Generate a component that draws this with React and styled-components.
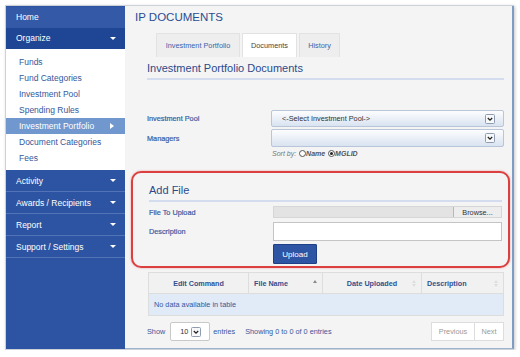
import React from 'react'
import styled, { createGlobalStyle } from 'styled-components'

const GlobalStyle = createGlobalStyle`
  html, body { margin: 0; padding: 0; background: #fff; }
  body { font-family: "Liberation Sans", Arial, sans-serif; }
  * { box-sizing: border-box; }
`

const Frame = styled.div`
  margin: 5px 0 0 5px;
  width: 509px;
  height: 345px;
  border: 1px solid #cdd2d9;
  box-shadow: 1px 1px 3px rgba(0, 0, 0, 0.22);
  display: grid;
  grid-template-columns: 119px 1fr;
  background: #fff;
`

/* ---------- sidebar ---------- */
const Sidebar = styled.nav`
  background: #2d54a2;
  padding-top: 1px;
  display: flex;
  flex-direction: column;
`

const NavHead = styled.div`
  height: ${p => p.h || 21}px;
  display: flex;
  align-items: center;
  justify-content: space-between;
  padding: 0 9px 0 10px;
  background: ${p => p.bg || '#2d54a2'};
  color: #fff;
  font-size: 8.5px;
  border-bottom: 1px solid ${p => (p.line ? '#5273b5' : 'transparent')};
`

const Caret = styled.span`
  width: 0;
  height: 0;
  border-left: 3px solid transparent;
  border-right: 3px solid transparent;
  border-top: 3px solid #fff;
`

const CaretRight = styled.span`
  width: 0;
  height: 0;
  border-top: 3px solid transparent;
  border-bottom: 3px solid transparent;
  border-left: 4px solid #fff;
`

const SubMenu = styled.div`
  background: #fff;
  padding: 5px 0 4px;
`

const SubItem = styled.div`
  height: 16px;
  display: flex;
  align-items: center;
  justify-content: space-between;
  padding: 0 11px 0 13px;
  font-size: 8.5px;
  color: ${p => (p.active ? '#fff' : '#34589c')};
  background: ${p => (p.active ? '#7098cf' : 'transparent')};
`

/* ---------- main ---------- */
const Main = styled.main`
  background: #f4f4f4;
  border-right: 2px solid #7f9dc3;
  border-bottom: 1px solid #9db3cf;
  padding: 4px 8px 0 22px;
  display: flex;
  flex-direction: column;
`

const Title = styled.h1`
  margin: 0 0 0 -12px;
  font-size: 11.5px;
  line-height: 14px;
  font-weight: normal;
  color: #2a4d93;
`

const Tabs = styled.div`
  display: flex;
  gap: 2px;
  margin: 9px 0 0 9px;
  height: 24px;
`

const Tab = styled.div`
  width: ${p => p.w}px;
  display: flex;
  align-items: center;
  justify-content: center;
  font-size: 7.3px;
  color: ${p => (p.active ? '#444' : '#3d63a9')};
  background: ${p => (p.active ? '#fff' : '#eeeeee')};
  border: 1px solid #e2e2e2;
  border-bottom: none;
`

const Heading = styled.h2`
  margin: ${p => p.mt || 5}px 0 0;
  font-size: 11px;
  line-height: 13px;
  font-weight: normal;
  color: #2b4a8b;
`

const Rule = styled.div`
  height: 2px;
  margin-top: 3px;
  background: #d3ddef;
`

const Form = styled.div`
  margin-top: 30px;
  display: flex;
  flex-direction: column;
  gap: 2px;
`

const Row = styled.div`
  display: grid;
  grid-template-columns: 124px 1fr;
  align-items: center;
  margin-top: ${p => p.mt || 0}px;
`

const Label = styled.span`
  font-size: 7.3px;
  color: #3a5ca3;
  -webkit-text-stroke: 0.2px #3a5ca3;
`

const Select = styled.div`
  height: ${p => p.h || 17}px;
  display: flex;
  align-items: center;
  justify-content: space-between;
  padding: 0 8px 0 10px;
  border: 1px solid #b9c5d9;
  border-radius: 2px;
  background: linear-gradient(#fdfdfe, #d9e3f1);
  font-size: 7.3px;
  color: #333;
`

const SortBy = styled.div`
  margin: 2px 0 0 125px;
  height: 8px;
  font-size: 7px;
  font-style: italic;
  color: #777;
  display: flex;
  align-items: center;
  b { color: #555; }
`

const Radio = styled.span`
  width: 7px;
  height: 7px;
  margin: 0 0 0 1px;
  border-radius: 50%;
  border: 1px solid #555;
  background: #fff;
  display: inline-flex;
  align-items: center;
  justify-content: center;
  &::after {
    content: '';
    width: 3px;
    height: 3px;
    border-radius: 50%;
    background: ${p => (p.checked ? '#222' : 'transparent')};
  }
`

const Highlight = styled.section`
  margin: 14px -6px 0 -16px;
  padding: 0 6px 2px 16px;
  border: 2px solid #dc3f3f;
  border-radius: 10px;
  box-shadow: 0 0 2px rgba(220, 60, 60, 0.5);
`

const FileBar = styled.div`
  height: 12px;
  display: flex;
  justify-content: flex-end;
  background: #e3e3e3;
  border: 1px solid #d6d6d6;
`

const Browse = styled.span`
  width: 48px;
  display: flex;
  align-items: center;
  justify-content: center;
  background: #ededed;
  border-left: 1px solid #b8b8b8;
  font-size: 7.3px;
  color: #333;
`

const TextInput = styled.div`
  height: 19px;
  background: #fff;
  border: 1px solid #c4c4c4;
`

const Button = styled.button`
  width: 44px;
  height: 20px;
  padding: 0;
  background: #2d55a3;
  border: 1px solid #1f4087;
  border-radius: 1px;
  color: #fff;
  font-family: inherit;
  font-size: 8px;
`

const Table = styled.table`
  margin: 4px 0 0 1px;
  width: 355px;
  border-collapse: collapse;
  table-layout: fixed;
`

const Th = styled.th`
  height: 21px;
  width: ${p => p.w}px;
  padding: 0 ${p => (p.center ? 0 : 5)}px;
  text-align: ${p => (p.center ? 'center' : 'left')};
  position: relative;
  background: #f1f1f1;
  border: 1px solid #dddddd;
  font-size: 7.2px;
  font-weight: bold;
  color: #31508f;
`

const SortIcon = styled.span`
  position: absolute;
  right: 5px;
  top: 7px;
  display: flex;
  flex-direction: column;
  gap: 1px;
  &::before, &::after {
    content: '';
    width: 0;
    height: 0;
    border-left: 2px solid transparent;
    border-right: 2px solid transparent;
  }
  &::before { border-bottom: 3px solid ${p => (p.asc ? '#8a8a8a' : '#dedede')}; }
  &::after { border-top: 3px solid ${p => (p.asc ? 'transparent' : '#dedede')}; }
`

const Td = styled.td`
  height: 22px;
  padding: 0 5px;
  background: #e1eaf7;
  border: 1px solid #dddddd;
  font-size: 7.3px;
  color: #34589c;
`

const Footer = styled.div`
  margin-top: 6px;
  height: 19px;
  display: flex;
  align-items: center;
  font-size: 7.3px;
  color: #34589c;
`

const LengthSelect = styled.div`
  width: 40px;
  height: 19px;
  margin: 0 3px 0 5px;
  display: flex;
  align-items: center;
  justify-content: space-between;
  padding: 0 8px 0 9px;
  background: #fff;
  border: 1px solid #c9c9c9;
  border-radius: 2px;
  color: #333;
`

const Info = styled.span`
  margin-left: 10px;
`

const Pager = styled.div`
  margin-left: auto;
  display: flex;
`

const PageButton = styled.span`
  width: ${p => p.w}px;
  height: 19px;
  display: flex;
  align-items: center;
  justify-content: center;
  background: #fff;
  border: 1px solid #dddddd;
  margin-left: -1px;
  color: #999;
`

const Chevron = () => (
  <svg width="10" height="10" viewBox="0 0 10 10">
    <rect x="0.5" y="0.5" width="9" height="9" rx="1" fill="#f7f8fa" stroke="#8e9bb0" />
    <path d="M2.8 4 L5 6.2 L7.2 4" fill="none" stroke="#222" strokeWidth="1.3" />
  </svg>
)

const subItems = ['Funds', 'Fund Categories', 'Investment Pool', 'Spending Rules', 'Investment Portfolio', 'Document Categories', 'Fees']
const lowerItems = ['Activity', 'Awards / Recipients', 'Report', 'Support / Settings']

export default function App() {
  return (
    <>
      <GlobalStyle />
      <Frame>
        <Sidebar>
          <NavHead bg="#3459a7">Home</NavHead>
          <NavHead bg="#1f4694">Organize <Caret /></NavHead>
          <SubMenu>
            {subItems.map(item => (
              <SubItem key={item} active={item === 'Investment Portfolio'}>
                {item}
                {item === 'Investment Portfolio' && <CaretRight />}
              </SubItem>
            ))}
          </SubMenu>
          {lowerItems.map(item => (
            <NavHead key={item} h={22} line>
              {item} <Caret />
            </NavHead>
          ))}
        </Sidebar>

        <Main>
          <Title>IP DOCUMENTS</Title>
          <Tabs>
            <Tab w={84}>Investment Portfolio</Tab>
            <Tab w={55} active>Documents</Tab>
            <Tab w={41}>History</Tab>
          </Tabs>
          <Heading>Investment Portfolio Documents</Heading>
          <Rule />

          <Form>
            <Row>
              <Label>Investment Pool</Label>
              <Select>&lt;-Select Investment Pool-&gt; <Chevron /></Select>
            </Row>
            <Row>
              <Label>Managers</Label>
              <Select h={18}><span /> <Chevron /></Select>
            </Row>
          </Form>
          <SortBy>
            Sort by:&nbsp;<Radio /><b>Name</b>&nbsp;<Radio checked /><b>MGLID</b>
          </SortBy>

          <Highlight>
            <Heading as="h3" mt={11}>Add File</Heading>
            <Rule />
            <Row mt={4}>
              <Label>File To Upload</Label>
              <FileBar><Browse>Browse...</Browse></FileBar>
            </Row>
            <Row mt={4}>
              <Label>Description</Label>
              <TextInput />
            </Row>
            <Row mt={3}>
              <span />
              <Button>Upload</Button>
            </Row>
          </Highlight>

          <Table>
            <thead>
              <tr>
                <Th w={100} center>Edit Command</Th>
                <Th w={74}>File Name <SortIcon asc /></Th>
                <Th w={99} center>Date Uploaded <SortIcon /></Th>
                <Th w={82}>Description <SortIcon /></Th>
              </tr>
            </thead>
            <tbody>
              <tr>
                <Td colSpan={4}>No data available in table</Td>
              </tr>
            </tbody>
          </Table>

          <Footer>
            Show
            <LengthSelect>10 <Chevron /></LengthSelect>
            entries
            <Info>Showing 0 to 0 of 0 entries</Info>
            <Pager>
              <PageButton w={44}>Previous</PageButton>
              <PageButton w={30}>Next</PageButton>
            </Pager>
          </Footer>
        </Main>
      </Frame>
    </>
  )
}
